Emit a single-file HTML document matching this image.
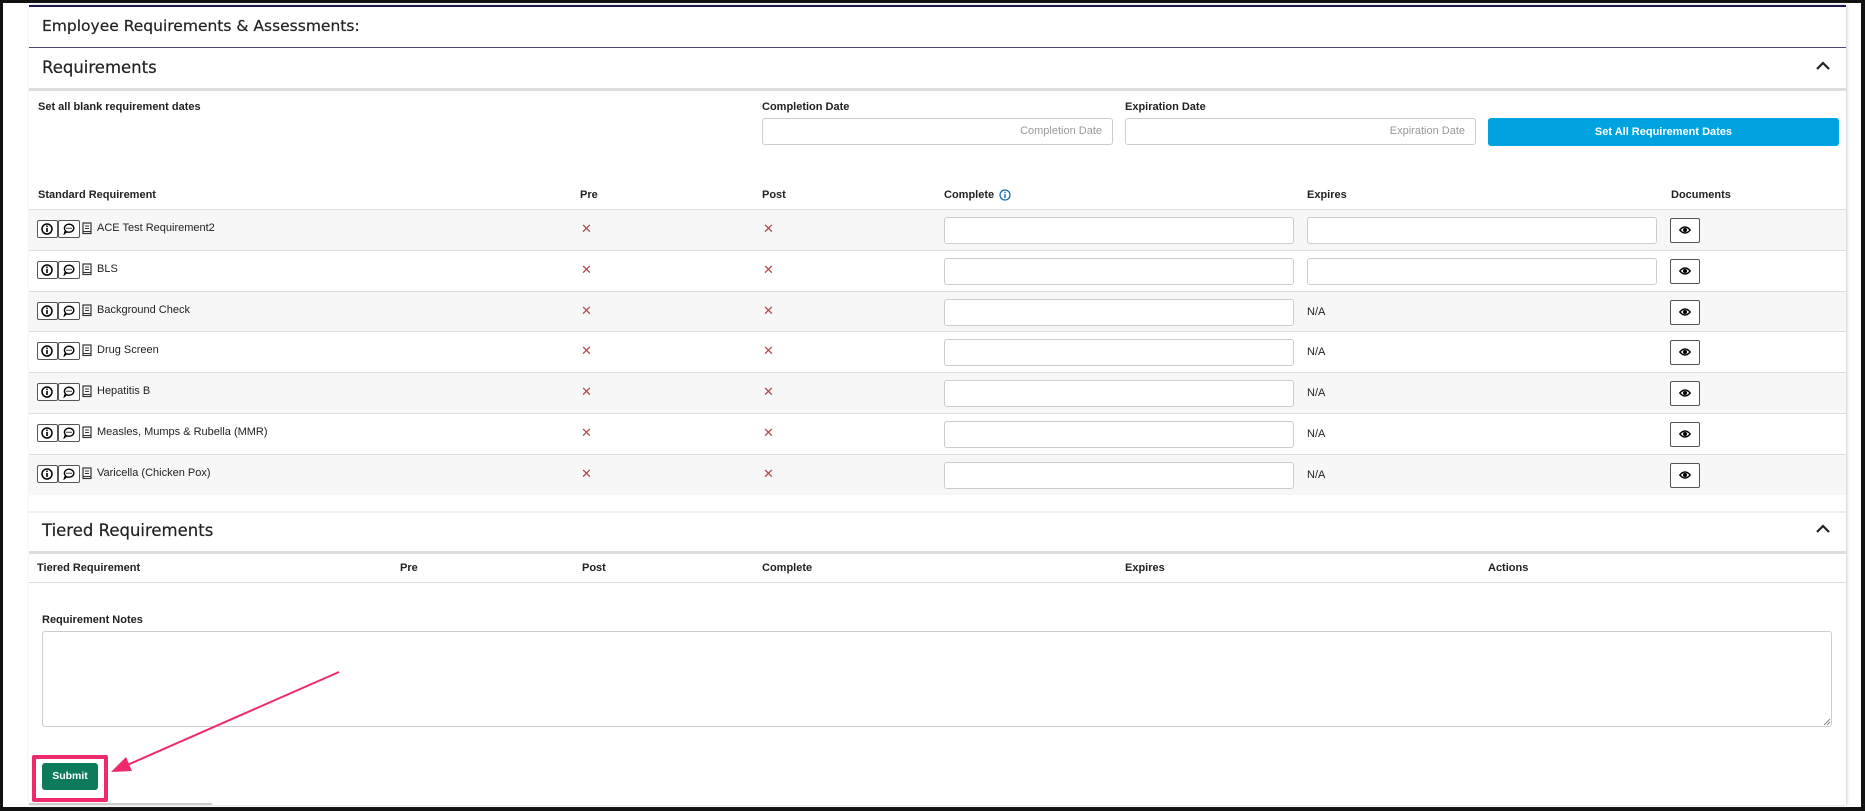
<!DOCTYPE html>
<html><head><meta charset="utf-8">
<style>
*{box-sizing:border-box;margin:0;padding:0}
body{width:1865px;height:811px;background:#fff;position:relative;overflow:hidden;font-family:"Liberation Sans",Arial,sans-serif;color:#222}
.a{position:absolute}
.frame{left:0;top:0;width:1865px;height:811px;border:3px solid #111;border-right-width:4px;border-bottom-width:4px}
.card{left:29px;top:5px;width:1817px;height:800px;background:#fff;border-top:2px solid #1c1a4f;box-shadow:1px 0 3px #ccc}
.h1{font-family:"DejaVu Sans","Liberation Sans",sans-serif;font-size:15.5px;color:#222;-webkit-text-stroke:0.2px #222}
.h2{font-family:"DejaVu Sans","Liberation Sans",sans-serif;font-size:16.5px;color:#222;-webkit-text-stroke:0.2px #222}
.b{font-weight:bold;font-size:11px;color:#222}
.t{font-size:11px;color:#222}
.inp{border:1px solid #ccc;border-radius:3px;background:#fff}
.ph{font-size:11px;color:#999;text-align:right;padding-right:10px;line-height:25px}
.x{color:#b04848;font-size:13px}
.eye{width:30px;height:25px;border:1px solid #555;border-radius:2px;background:#fff}
.ib{height:18px;border:1px solid #555;border-radius:2px;background:#fff}
</style></head><body>
<div class="a frame"></div>
<div class="a card"></div>
<div class="a h1" style="left:42px;top:17px">Employee Requirements &amp; Assessments:</div>
<div class="a" style="left:29px;top:47px;width:1817px;height:1px;background:#4a4870"></div>
<div class="a" style="left:29px;top:48px;width:1817px;height:43px;background:#fff;border-bottom:3px solid #ddd"></div>
<div class="a h2" style="left:42px;top:58px">Requirements</div>
<svg class="a" style="left:1815px;top:61px" width="16" height="10" viewBox="0 0 16 10"><path d="M2 8 L8 2 L14 8" fill="none" stroke="#222" stroke-width="2.2"/></svg>

<div class="a b" style="left:38px;top:101px">Set all blank requirement dates</div>
<div class="a b" style="left:762px;top:101px">Completion Date</div>
<div class="a inp ph" style="left:762px;top:118px;width:351px;height:27px">Completion Date</div>
<div class="a b" style="left:1125px;top:101px">Expiration Date</div>
<div class="a inp ph" style="left:1125px;top:118px;width:351px;height:27px">Expiration Date</div>
<div class="a" style="left:1488px;top:118px;width:351px;height:28px;background:#00a3e0;border-radius:3px;color:#fff;font-weight:bold;font-size:11px;text-align:center;line-height:28px">Set All Requirement Dates</div>

<div class="a b" style="left:38px;top:189px">Standard Requirement</div>
<div class="a b" style="left:580px;top:189px">Pre</div>
<div class="a b" style="left:762px;top:189px">Post</div>
<div class="a b" style="left:944px;top:189px">Complete</div>
<svg class="a" style="left:999px;top:189px" width="12" height="12" viewBox="0 0 12 12"><circle cx="6" cy="6" r="5" fill="none" stroke="#1a6fb5" stroke-width="1.3"/><rect x="5.3" y="5" width="1.4" height="4" fill="#1a6fb5"/><rect x="5.3" y="2.8" width="1.4" height="1.3" fill="#1a6fb5"/></svg>
<div class="a b" style="left:1307px;top:189px">Expires</div>
<div class="a b" style="left:1671px;top:189px">Documents</div>

<div id="rows"></div>
<script>
(function(){
var names=["ACE Test Requirement2","BLS","Background Check","Drug Screen","Hepatitis B","Measles, Mumps & Rubella (MMR)","Varicella (Chicken Pox)"];
var h="";
for(var i=0;i<7;i++){
 var ty=Math.round(209+i*40.8), c=ty+20;
 h+='<div class="a" style="left:29px;top:'+ty+'px;width:1817px;height:41px;background:'+(i%2==0?'#f7f7f7':'#fff')+';border-top:1px solid #ddd"></div>';
 h+='<div class="a ib" style="left:37px;top:'+(c-9)+'px;width:21px"></div><div class="a ib" style="left:58px;top:'+(c-9)+'px;width:22px"></div>';
 h+='<svg class="a" style="left:41px;top:'+(c-6)+'px" width="12" height="12" viewBox="0 0 12 12"><circle cx="6" cy="6" r="5" fill="none" stroke="#000" stroke-width="1.5"/><rect x="5.2" y="5" width="1.6" height="4" fill="#000"/><rect x="5.2" y="2.6" width="1.6" height="1.5" fill="#000"/></svg>';
 h+='<svg class="a" style="left:63px;top:'+(c-6)+'px" width="12" height="12" viewBox="0 0 12 12"><path d="M6 1.2a4.8 4 0 1 1 -2.3 7.5 L1.5 10.5 L2.4 7.6 A4.8 4 0 0 1 6 1.2z" fill="none" stroke="#000" stroke-width="1.4"/><circle cx="4" cy="5.3" r=".7"/><circle cx="6" cy="5.3" r=".7"/><circle cx="8" cy="5.3" r=".7"/></svg>';
 h+='<svg class="a" style="left:82px;top:'+(c-7)+'px" width="10" height="13" viewBox="0 0 10 13"><rect x="1" y="1" width="8" height="10.5" fill="none" stroke="#333" stroke-width="1.2"/><path d="M3 4h4M3 6.5h4M1 9.5h8" stroke="#333" stroke-width="1"/></svg>';
 h+='<div class="a t" style="left:97px;top:'+(c-7)+'px">'+names[i].replace("&","&amp;")+'</div>';
 h+='<div class="a x" style="left:581px;top:'+(c-8)+'px">✕</div><div class="a x" style="left:763px;top:'+(c-8)+'px">✕</div>';
 h+='<div class="a inp" style="left:944px;top:'+(c-12)+'px;width:350px;height:27px"></div>';
 if(i<2) h+='<div class="a inp" style="left:1307px;top:'+(c-12)+'px;width:350px;height:27px"></div>';
 else h+='<div class="a t" style="left:1307px;top:'+(c-5)+'px">N/A</div>';
 h+='<div class="a eye" style="left:1670px;top:'+(c-11)+'px"></div>';
 h+='<svg class="a" style="left:1679px;top:'+(c-4)+'px" width="12" height="10" viewBox="0 0 12 10"><path d="M0.8 5 Q6 -1 11.2 5 Q6 11 0.8 5z" fill="none" stroke="#000" stroke-width="1.4"/><circle cx="6" cy="5" r="2" fill="#000"/></svg>';
}
document.getElementById("rows").innerHTML=h;
})();
</script>

<div class="a" style="left:29px;top:511px;width:1817px;height:43px;background:#fff;border-top:2px solid #eee;border-bottom:3px solid #ddd"></div>
<div class="a h2" style="left:42px;top:521px">Tiered Requirements</div>
<svg class="a" style="left:1815px;top:524px" width="16" height="10" viewBox="0 0 16 10"><path d="M2 8 L8 2 L14 8" fill="none" stroke="#222" stroke-width="2.2"/></svg>
<div class="a b" style="left:37px;top:562px">Tiered Requirement</div>
<div class="a b" style="left:400px;top:562px">Pre</div>
<div class="a b" style="left:582px;top:562px">Post</div>
<div class="a b" style="left:762px;top:562px">Complete</div>
<div class="a b" style="left:1125px;top:562px">Expires</div>
<div class="a b" style="left:1488px;top:562px">Actions</div>
<div class="a" style="left:29px;top:582px;width:1817px;height:1px;background:#ddd"></div>

<div class="a b" style="left:42px;top:614px">Requirement Notes</div>
<div class="a inp" style="left:42px;top:631px;width:1790px;height:96px"></div>
<svg class="a" style="left:1823px;top:718px" width="8" height="8" viewBox="0 0 8 8"><path d="M1 7L7 1M4 7L7 4" stroke="#888" stroke-width="1"/></svg>

<div class="a" style="left:32px;top:755px;width:76px;height:47px;border:4px solid #ee2a6a;border-radius:2px"></div>
<div class="a" style="left:42px;top:763px;width:56px;height:27px;background:#0e7a5c;border-radius:3px;color:#fff;font-weight:bold;font-size:10.5px;text-align:center;line-height:27px">Submit</div>
<svg class="a" style="left:0;top:0" width="1865" height="811"><line x1="339" y1="672" x2="125" y2="766" stroke="#ee2a6a" stroke-width="2"/><polygon points="111,772 126,757 132,771" fill="#ee2a6a"/></svg>
<div class="a" style="left:29px;top:803px;width:183px;height:2px;background:#ccc"></div>
</body></html>
